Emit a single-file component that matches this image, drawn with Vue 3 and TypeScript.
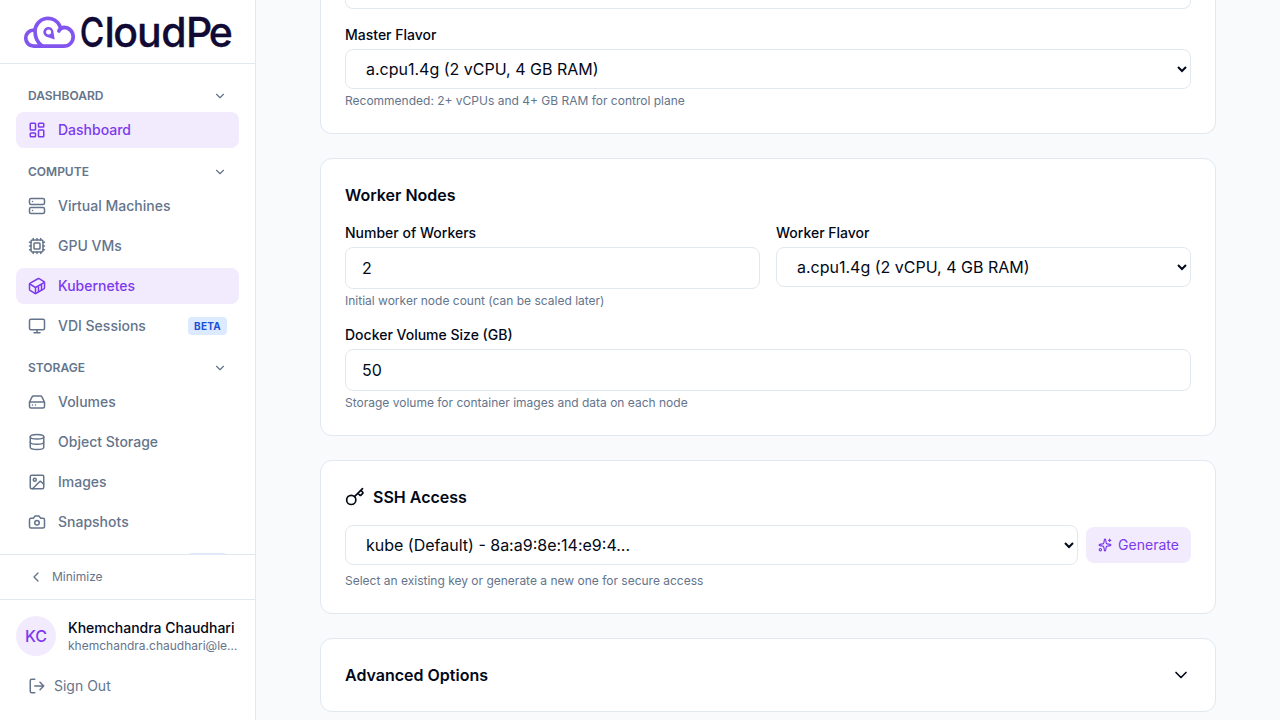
<script setup lang="ts">
import { ref } from 'vue'

interface NavItem {
  label: string
  icon: string
  active?: boolean
  badge?: string
}
interface NavSection {
  title: string
  items: NavItem[]
}

const icons: Record<string, string> = {
  dashboard:
    '<rect width="7" height="9" x="3" y="3" rx="1"/><rect width="7" height="5" x="14" y="3" rx="1"/><rect width="7" height="9" x="14" y="12" rx="1"/><rect width="7" height="5" x="3" y="16" rx="1"/>',
  server:
    '<rect width="20" height="8" x="2" y="2" rx="2"/><rect width="20" height="8" x="2" y="14" rx="2"/><path d="M6 6h.01M6 18h.01"/>',
  cpu: '<rect width="16" height="16" x="4" y="4" rx="2"/><rect width="8" height="8" x="8" y="8" rx="1"/><path d="M12 20v2M12 2v2M17 20v2M17 2v2M2 12h2M2 17h2M2 7h2M20 12h2M20 17h2M20 7h2M7 20v2M7 2v2"/>',
  container:
    '<path d="M22 7.7c0-.6-.4-1.2-.8-1.5l-6.3-3.9a1.72 1.72 0 0 0-1.7 0l-10.3 6c-.5.2-.9.8-.9 1.4v6.6c0 .5.4 1.2.8 1.5l6.3 3.9a1.72 1.72 0 0 0 1.7 0l10.3-6c.5-.3.9-1 .9-1.5Z"/><path d="M10 21.9V14L2.1 9.1M10 14l11.9-6.9M14 19.8v-8.1M18 17.5V9.4"/>',
  monitor: '<rect width="20" height="14" x="2" y="3" rx="2"/><path d="M8 21h8M12 17v4"/>',
  drive:
    '<path d="M22 12H2M5.45 5.11 2 12v6a2 2 0 0 0 2 2h16a2 2 0 0 0 2-2v-6l-3.45-6.89A2 2 0 0 0 16.76 4H7.24a2 2 0 0 0-1.79 1.11zM6 16h.01M10 16h.01"/>',
  database:
    '<ellipse cx="12" cy="5" rx="9" ry="3"/><path d="M3 5v14a9 3 0 0 0 18 0V5"/><path d="M3 12a9 3 0 0 0 18 0"/>',
  image:
    '<rect width="18" height="18" x="3" y="3" rx="2"/><circle cx="9" cy="9" r="2"/><path d="m21 15-3.086-3.086a2 2 0 0 0-2.828 0L6 21"/>',
  camera:
    '<path d="M14.5 4h-5L7 7H4a2 2 0 0 0-2 2v9a2 2 0 0 0 2 2h16a2 2 0 0 0 2-2V9a2 2 0 0 0-2-2h-3l-2.5-3z"/><circle cx="12" cy="13" r="3"/>',
  chevronDown: '<path d="m6 9 6 6 6-6"/>',
  chevronLeft: '<path d="m15 18-6-6 6-6"/>',
  logout: '<path d="M9 21H5a2 2 0 0 1-2-2V5a2 2 0 0 1 2-2h4M16 17l5-5-5-5M21 12H9"/>',
  key: '<path d="m15.5 7.5 2.3 2.3a1 1 0 0 0 1.4 0l2.1-2.1a1 1 0 0 0 0-1.4L19 4M21 2l-9.6 9.6"/><circle cx="7.5" cy="15.5" r="5.5"/>',
  sparkles:
    '<path d="M11.017 2.814a1 1 0 0 1 1.966 0l1.051 5.558a2 2 0 0 0 1.594 1.594l5.558 1.051a1 1 0 0 1 0 1.966l-5.558 1.051a2 2 0 0 0-1.594 1.594l-1.051 5.558a1 1 0 0 1-1.966 0l-1.051-5.558a2 2 0 0 0-1.594-1.594l-5.558-1.051a1 1 0 0 1 0-1.966l5.558-1.051a2 2 0 0 0 1.594-1.594zM20 2v4M22 4h-4"/><circle cx="4" cy="20" r="2"/>',
}

const sections: NavSection[] = [
  { title: 'Dashboard', items: [{ label: 'Dashboard', icon: 'dashboard', active: true }] },
  {
    title: 'Compute',
    items: [
      { label: 'Virtual Machines', icon: 'server' },
      { label: 'GPU VMs', icon: 'cpu' },
      { label: 'Kubernetes', icon: 'container', active: true },
      { label: 'VDI Sessions', icon: 'monitor', badge: 'BETA' },
    ],
  },
  {
    title: 'Storage',
    items: [
      { label: 'Volumes', icon: 'drive' },
      { label: 'Object Storage', icon: 'database' },
      { label: 'Images', icon: 'image' },
      { label: 'Snapshots', icon: 'camera' },
    ],
  },
]

const flavor = 'a.cpu1.4g (2 vCPU, 4 GB RAM)'
const workers = ref('2')
const volumeSize = ref('50')
</script>

<template>
  <div class="app">
    <aside class="sidebar">
      <header class="brand">
        <svg class="logo" width="232" height="63" viewBox="0 0 232 63">
          <g fill="none" stroke="#8355ef" stroke-width="3.7" stroke-linecap="round">
            <path d="M58.9 31Q59.6 28.4 63.8 27.4A9.4 9.4 0 0 1 63.8 46.2H33.8A8.1 8.1 0 0 1 33.8 30" />
            <path d="M60.2 26.8A13 13 0 0 0 35 31.3C35 37.5 37.5 42.5 42 46" />
          </g>
          <path
            fill="#8355ef"
            fill-rule="evenodd"
            d="M54.7 39.4 47.2 37A5.1 5.1 0 1 1 53.5 32.2ZM48.6 29.4A2.5 2.5 0 1 0 48.6 34.4A2.5 2.5 0 1 0 48.6 29.4Z"
          />
          <text class="wordmark" y="47"><tspan x="79.8" textLength="24.6" lengthAdjust="spacingAndGlyphs">C</tspan><tspan x="104.6 113.2 137.1 161.2 185.9 208.7">loudPe</tspan></text>
        </svg>
      </header>

      <nav class="nav">
        <section v-for="s in sections" :key="s.title" class="group">
          <div class="group-head">
            <span>{{ s.title }}</span>
            <svg class="icon" width="14" height="14" viewBox="0 0 24 24" v-html="icons.chevronDown" />
          </div>
          <div class="items">
            <a v-for="i in s.items" :key="i.label" class="item" :class="{ active: i.active }">
              <svg class="icon" width="18" height="18" viewBox="0 0 24 24" v-html="icons[i.icon]" />
              <span class="item-label">{{ i.label }}</span>
              <span v-if="i.badge" class="badge">{{ i.badge }}</span>
            </a>
            <a v-if="s.title === 'Storage'" class="item item-clipped"><span class="badge" /></a>
          </div>
        </section>
      </nav>

      <div class="minimize">
        <svg class="icon" width="16" height="16" viewBox="0 0 24 24" v-html="icons.chevronLeft" />
        <span>Minimize</span>
      </div>

      <footer class="account">
        <div class="user">
          <div class="avatar">KC</div>
          <div class="user-text">
            <div class="user-name">Khemchandra Chaudhari</div>
            <div class="user-mail">khemchandra.chaudhari@le…</div>
          </div>
        </div>
        <div class="signout">
          <svg class="icon" width="18" height="18" viewBox="0 0 24 24" v-html="icons.logout" />
          <span>Sign Out</span>
        </div>
      </footer>
    </aside>

    <main class="main">
      <section class="card card-top">
        <div class="field-end" />
        <div class="field">
          <label>Master Flavor</label>
          <select><option>{{ flavor }}</option></select>
          <p class="hint">Recommended: 2+ vCPUs and 4+ GB RAM for control plane</p>
        </div>
      </section>

      <section class="card">
        <h2>Worker Nodes</h2>
        <div class="columns">
          <div class="field">
            <label>Number of Workers</label>
            <input v-model="workers" type="text" />
            <p class="hint">Initial worker node count (can be scaled later)</p>
          </div>
          <div class="field">
            <label>Worker Flavor</label>
            <select><option>{{ flavor }}</option></select>
          </div>
        </div>
        <div class="field">
          <label>Docker Volume Size (GB)</label>
          <input v-model="volumeSize" type="text" />
          <p class="hint">Storage volume for container images and data on each node</p>
        </div>
      </section>

      <section class="card">
        <h2>
          <svg class="icon" width="20" height="20" viewBox="0 0 24 24" v-html="icons.key" />
          <span>SSH Access</span>
        </h2>
        <div class="key-row">
          <select><option>kube (Default) - 8a:a9:8e:14:e9:4...</option></select>
          <button class="generate">
            <svg class="icon" width="14" height="14" viewBox="0 0 24 24" v-html="icons.sparkles" />
            <span>Generate</span>
          </button>
        </div>
        <p class="hint hint-wide">Select an existing key or generate a new one for secure access</p>
      </section>

      <section class="card advanced">
        <h2>Advanced Options</h2>
        <svg class="icon" width="20" height="20" viewBox="0 0 24 24" v-html="icons.chevronDown" />
      </section>
    </main>
  </div>
</template>

<style>
body {
  margin: 0;
  overflow: hidden;
}
</style>

<style scoped>
* {
  box-sizing: border-box;
}
.app {
  display: flex;
  width: 1280px;
  height: 720px;
  overflow: hidden;
  background: #f8fafc;
  color: #020817;
  font: 400 14px/20px Inter, 'Liberation Sans', sans-serif;
}
.icon {
  flex: none;
  fill: none;
  stroke: currentColor;
  stroke-width: 2;
  stroke-linecap: round;
  stroke-linejoin: round;
}
.sidebar {
  display: flex;
  flex: none;
  flex-direction: column;
  width: 256px;
  background: #fff;
  border-right: 1px solid #e2e8f0;
  color: #64748b;
}
.brand {
  flex: none;
  height: 64px;
  border-bottom: 1px solid #e2e8f0;
}
.logo {
  display: block;
  overflow: visible;
}
.wordmark {
  font: 500 41px Inter, sans-serif;
  fill: #110a35;
  stroke: #110a35;
  stroke-width: 0.3px;
}
.nav {
  flex: 1;
  min-height: 0;
  padding: 16px 16px 0;
  overflow: hidden;
}
.group {
  margin-bottom: 8px;
}
.group-head {
  display: flex;
  align-items: center;
  justify-content: space-between;
  height: 32px;
  padding: 0 12px;
  font-size: 12px;
  font-weight: 600;
  line-height: 16px;
  text-transform: uppercase;
}
.items {
  display: flex;
  flex-direction: column;
  gap: 4px;
}
.item {
  display: flex;
  align-items: center;
  gap: 12px;
  height: 36px;
  padding: 0 12px;
  border-radius: 8px;
  font-weight: 500;
}
.item.active {
  background: #f2ebfd;
  color: #7c3aed;
}
.item-label {
  flex: 1;
}
.badge {
  padding: 1.5px 6px;
  border-radius: 4px;
  background: #dbeafe;
  color: #1d4ed8;
  font-size: 10px;
  font-weight: 700;
  letter-spacing: 0.25px;
  line-height: 15px;
}
.item-clipped {
  justify-content: flex-end;
}
.item-clipped .badge {
  width: 39px;
  height: 18px;
}
.minimize {
  display: flex;
  flex: none;
  align-items: center;
  gap: 8px;
  height: 45px;
  padding-left: 28px;
  border-top: 1px solid #e2e8f0;
  font-size: 12px;
}
.account {
  flex: none;
  height: 121px;
  padding: 16px;
  border-top: 1px solid #e2e8f0;
}
.user {
  display: flex;
  align-items: center;
  gap: 12px;
}
.avatar {
  display: flex;
  flex: none;
  align-items: center;
  justify-content: center;
  width: 40px;
  height: 40px;
  border-radius: 50%;
  background: #f2ebfd;
  color: #7c3aed;
  font-size: 16px;
  font-weight: 500;
}
.user-text {
  min-width: 0;
  white-space: nowrap;
}
.user-name {
  color: #020817;
  font-weight: 500;
}
.user-mail {
  font-size: 12px;
  line-height: 16px;
}
.signout {
  display: flex;
  align-items: center;
  gap: 8px;
  height: 36px;
  margin-top: 12px;
  padding-left: 12px;
}
.main {
  display: flex;
  flex: 1;
  flex-direction: column;
  gap: 24px;
  padding: 0 64px;
}
.card {
  display: flex;
  flex: none;
  flex-direction: column;
  gap: 16px;
  padding: 24px;
  background: #fff;
  border: 1px solid #e2e8f0;
  border-radius: 12px;
}
.card-top {
  padding-top: 0;
  border-top: 0;
  border-radius: 0 0 12px 12px;
}
.field-end {
  height: 9px;
  border: 1px solid #e2e8f0;
  border-top: 0;
  border-radius: 0 0 8px 8px;
}
h2 {
  display: flex;
  align-items: center;
  gap: 8px;
  margin: 0;
  font-size: 16px;
  font-weight: 600;
  line-height: 24px;
}
.columns {
  display: grid;
  grid-template-columns: 1fr 1fr;
  gap: 16px;
}
.field {
  display: flex;
  flex-direction: column;
  gap: 4px;
}
label {
  font-weight: 500;
}
input,
select {
  width: 100%;
  margin: 0;
  padding: 8px 16px;
  background: #fff;
  border: 1px solid #e2e8f0;
  border-radius: 8px;
  color: #020817;
  font: 400 16px/24px Inter, 'Liberation Sans', sans-serif;
  outline: none;
}
input {
  height: 42px;
}
select {
  height: 40px;
}
.hint {
  margin: 0;
  color: #64748b;
  font-size: 12px;
  line-height: 16px;
}
.hint-wide {
  margin-top: -8px;
}
.key-row {
  display: flex;
  align-items: center;
  gap: 8px;
}
.key-row select {
  flex: 1;
  min-width: 0;
}
.generate {
  display: flex;
  align-items: center;
  justify-content: center;
  gap: 6px;
  width: 105px;
  height: 36px;
  padding: 0;
  background: #f2ebfd;
  border: 0;
  border-radius: 8px;
  color: #7c3aed;
  font: inherit;
}
.advanced {
  flex-direction: row;
  align-items: center;
  justify-content: space-between;
}
</style>
